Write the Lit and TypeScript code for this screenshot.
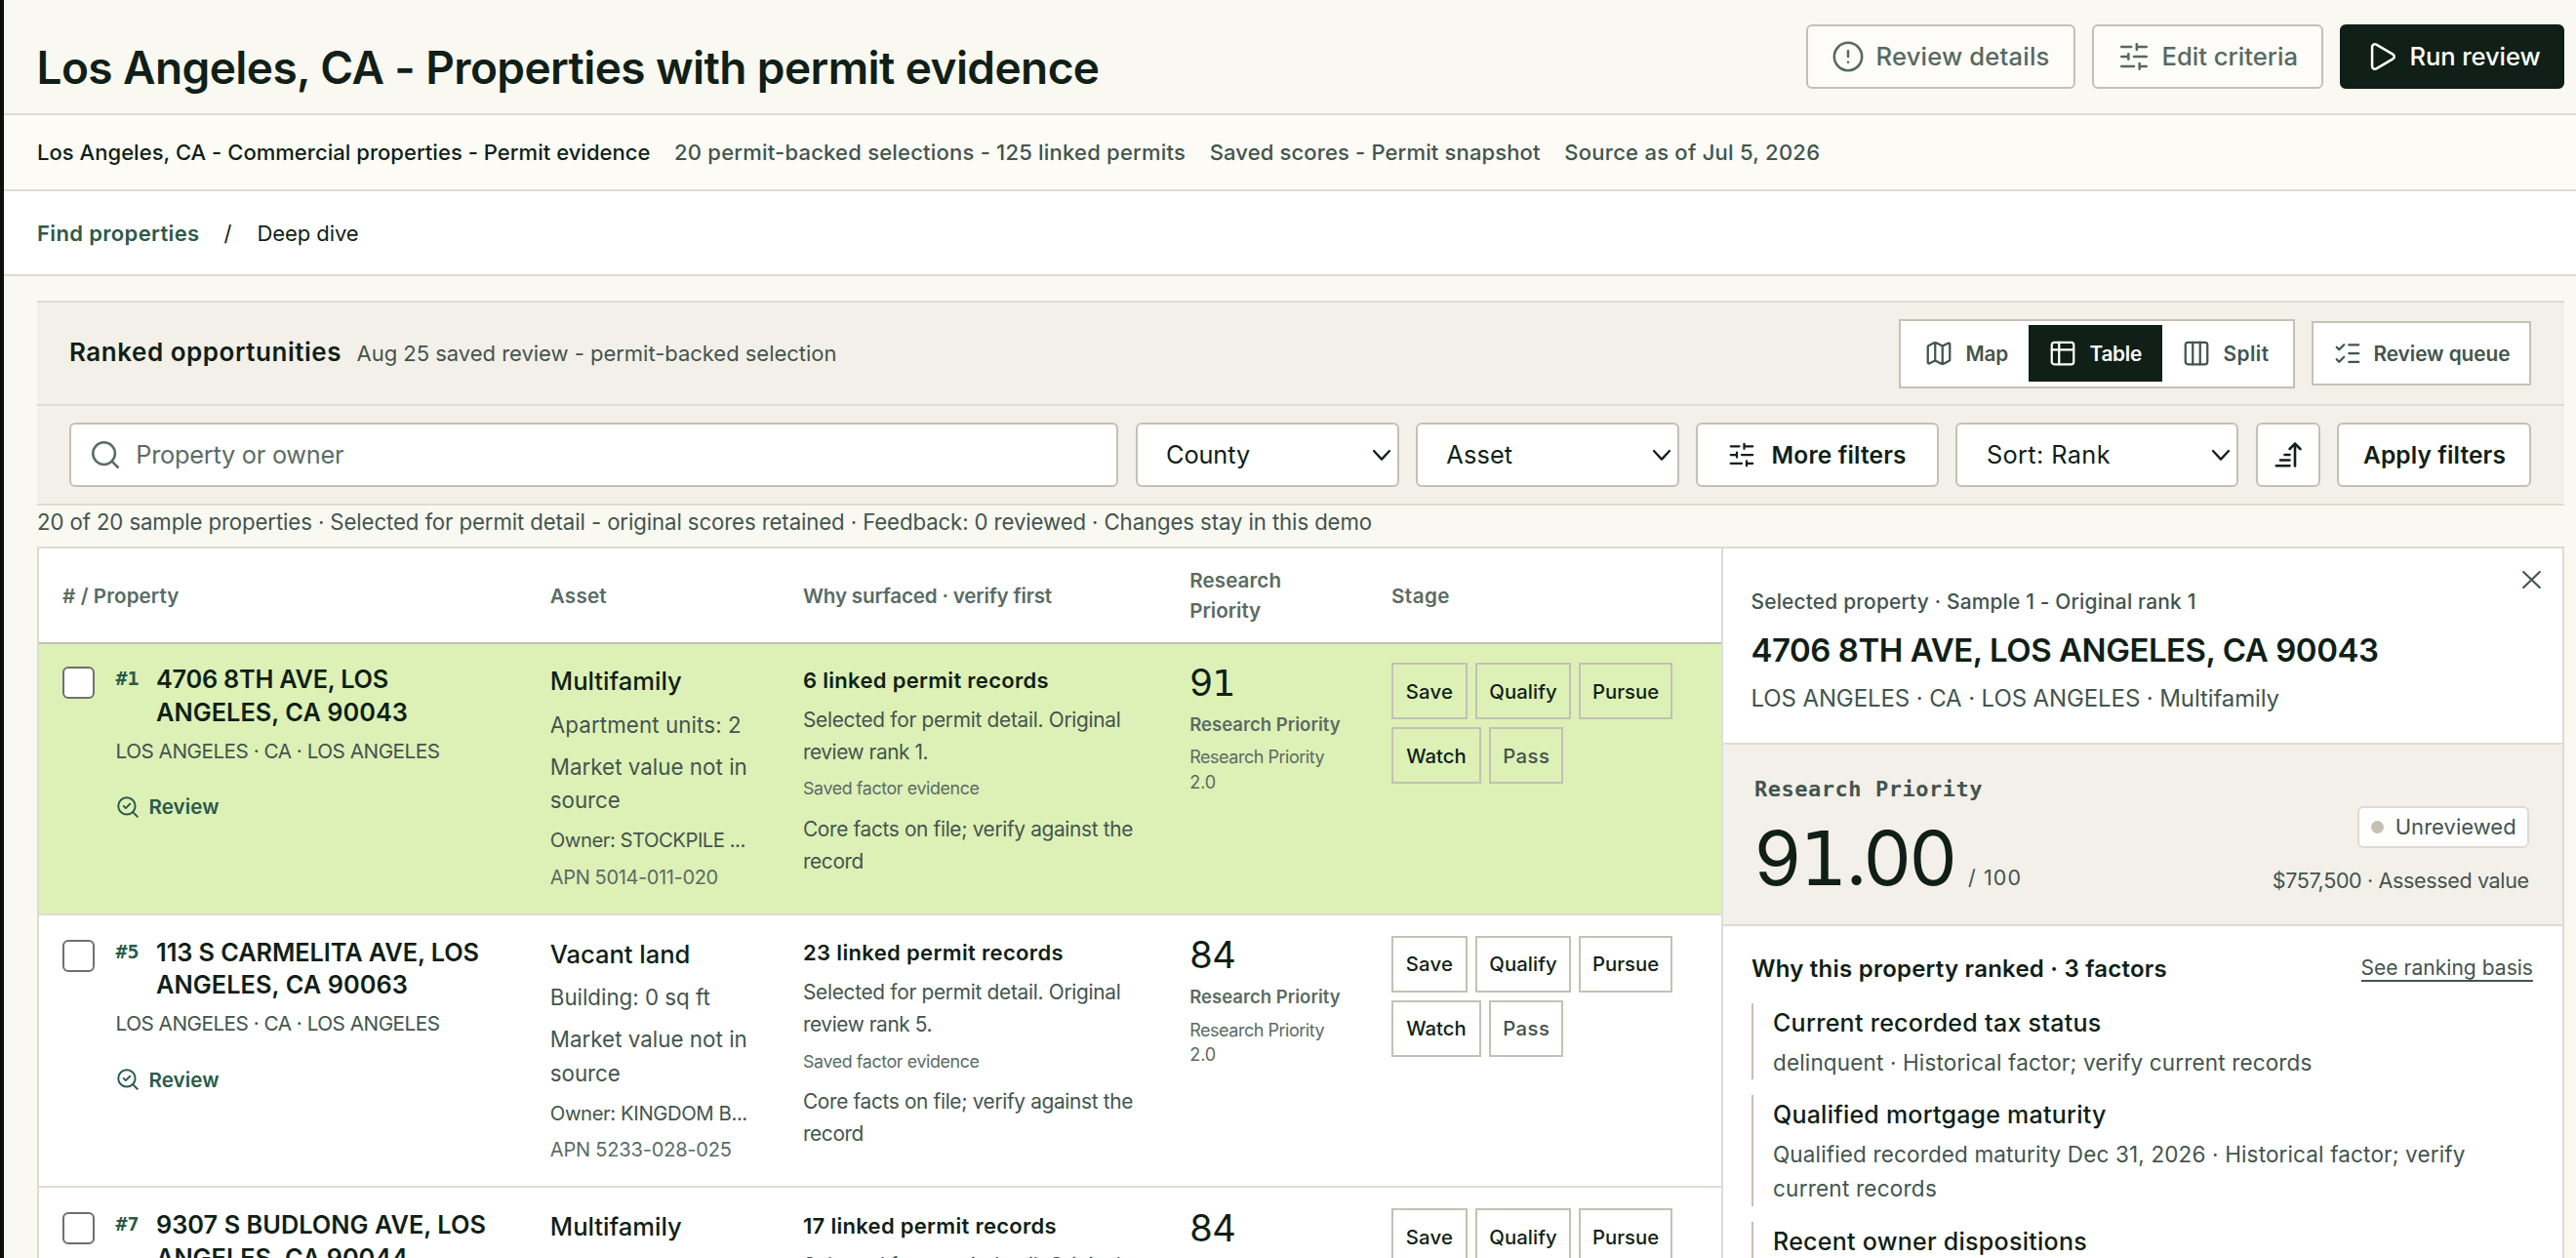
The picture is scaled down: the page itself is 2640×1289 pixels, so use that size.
import { LitElement, html, css, svg, nothing } from "lit";
import { customElement } from "lit/decorators.js";

interface Property {
  rank: string;
  address: [string, number][];
  kind: [string, number];
  size: [string, number];
  owner: [string, number];
  apn: [string, number];
  permits: [string, number];
  review: [string, number];
  score: string;
  selected?: boolean;
}

const PROPERTIES: Property[] = [
  {
    rank: "#1",
    address: [["4706 8TH AVE, LOS", 238], ["ANGELES, CA 90043", 258]],
    kind: ["Multifamily", 135],
    size: ["Apartment units: 2", 196],
    owner: ["Owner: STOCKPILE ...", 200],
    apn: ["APN 5014-011-020", 172],
    permits: ["6 linked permit records", 252],
    review: ["review rank 1.", 128],
    score: "91",
    selected: true,
  },
  {
    rank: "#5",
    address: [["113 S CARMELITA AVE, LOS", 331], ["ANGELES, CA 90063", 258]],
    kind: ["Vacant land", 143.5],
    size: ["Building: 0 sq ft", 164],
    owner: ["Owner: KINGDOM B...", 202],
    apn: ["APN 5233-028-025", 186],
    permits: ["23 linked permit records", 267],
    review: ["review rank 5.", 132],
    score: "84",
  },
  {
    rank: "#7",
    address: [["9307 S BUDLONG AVE, LOS", 338], ["ANGELES, CA 90044", 258]],
    kind: ["Multifamily", 135],
    size: ["Apartment units: 4", 197],
    owner: ["Owner: SUNRISE H...", 201],
    apn: ["APN 6056-003-018", 186],
    permits: ["17 linked permit records", 260],
    review: ["review rank 7.", 132],
    score: "84",
  },
];

const ICONS = {
  alert: svg`<circle cx="12" cy="12" r="10"/><path d="M12 8v4M12 16h.01"/>`,
  sliders: svg`<path d="M10 5H3M12 19H3M14 3v4M16 17v4M21 12h-9M21 19h-5M21 5h-7M8 10v4M8 12H3"/>`,
  play: svg`<path d="M5 5a2 2 0 0 1 3.008-1.728l11.997 6.998a2 2 0 0 1 .003 3.458l-12 7A2 2 0 0 1 5 19z"/>`,
  map: svg`<path d="M14.106 5.553a2 2 0 0 0 1.788 0l3.659-1.83A1 1 0 0 1 21 4.619v12.764a1 1 0 0 1-.553.894l-4.553 2.277a2 2 0 0 1-1.788 0l-4.212-2.106a2 2 0 0 0-1.788 0l-3.659 1.83A1 1 0 0 1 3 19.381V6.618a1 1 0 0 1 .553-.894l4.553-2.277a2 2 0 0 1 1.788 0zM15 5.764v15M9 3.236v15"/>`,
  table: svg`<rect x="3" y="3" width="18" height="18" rx="2"/><path d="M3 9h18M9 3v18"/>`,
  split: svg`<rect x="3" y="3" width="18" height="18" rx="2"/><path d="M9 3v18M15 3v18"/>`,
  checks: svg`<path d="M13 5h8M13 12h8M13 19h8M3 17l2 2 4-4M3 7l2 2 4-4"/>`,
  search: svg`<circle cx="11" cy="11" r="8"/><path d="m21 21-4.34-4.34"/>`,
  searchCheck: svg`<circle cx="11" cy="11" r="8"/><path d="m21 21-4.3-4.3M8 11l2 2 4-4"/>`,
};

const icon = (name: keyof typeof ICONS, cls: string) =>
  html`<svg class="icon ${cls}" viewBox="0 0 24 24" aria-hidden="true">${ICONS[name]}</svg>`;

/* A line of text with the advance width it should occupy. */
const t = (text: string, width: number, cls = "") =>
  html`<span class="t ${cls}" data-w=${width}>${text}</span>`;

const chevron = html`<svg class="chevron" viewBox="0 0 18 11" aria-hidden="true"><path d="M1 1l8 8.6L17 1"/></svg>`;

/* The figure one carries a foot in scores. */
const score = (value: string) =>
  [...value].map((c) => (c === "1" ? html`<span class="one">1</span>` : c));

@customElement("app-root")
export class AppRoot extends LitElement {
  static styles = css`
    :host {
      display: block;
      font-family: Inter, "Liberation Sans", sans-serif;
      color: #101f17;
      --muted: #43544e;
      --soft: #5a6b65;
      --line: #dedbd1;
      --edge: #c4c0b4;
      --green: #2a5b4a;
      --ink: #101f17;
    }
    * { box-sizing: border-box; }
    .page { display: flex; width: 2640px; height: 1289px; overflow: hidden; background: #f9f9f1; }
    .rail { width: 4px; flex: none; background: #0c0f0a; }
    .main { flex: 1; min-width: 0; }
    .t { white-space: pre; display: block; }
    .icon { fill: none; stroke: currentColor; stroke-width: 1.8; stroke-linecap: round; stroke-linejoin: round; flex: none; display: block; }
    .i34 { width: 34px; height: 34px; }
    .i30 { width: 30px; height: 30px; }
    .i26 { width: 26px; height: 26px; }

    .header { display: flex; align-items: center; height: 118px; padding: 0 12.5px 0 33.5px; border-bottom: 2px solid var(--line); }
    .title { margin: 21px auto 0 0; font-size: 46px; font-weight: 600; line-height: 54px; }
    .actions { display: flex; gap: 17px; }
    .btn { display: flex; align-items: center; height: 66px; gap: 12px; padding-left: 24px; border: 2px solid var(--edge); border-radius: 6px; background: #fdfcf8; color: #566963; font-size: 25.6px; font-weight: 500; line-height: 32px; }
    .details { width: 276px; }
    .criteria { width: 237px; }
    .run { width: 230px; background: #101f17; border-color: #101f17; color: #fff; }

    .facts { display: flex; align-items: center; gap: 24.6px; height: 78px; padding-left: 34px; background: #fcfbf6; border-bottom: 2px solid var(--line); font-size: 22px; font-weight: 500; line-height: 30px; color: var(--muted); }
    .dark { color: var(--ink); }
    .crumbs { display: flex; align-items: center; height: 87px; padding-left: 34px; background: #fff; border-bottom: 2px solid var(--line); font-size: 22px; line-height: 30px; }
    .crumb-link { color: var(--green); font-weight: 600; }
    .slash { margin: 0 25px; }

    .content { padding: 25px 12px 0 34px; }
    .tools { background: #f3f0e9; border-top: 2px solid var(--line); border-bottom: 2px solid var(--line); }
    .tools-head { display: flex; align-items: center; height: 106px; padding: 0 34px 0 33px; border-bottom: 2px solid var(--line); }
    .ranked { font-size: 26px; font-weight: 600; line-height: 32px; margin-top: -2px; }
    .saved { font-size: 22px; line-height: 30px; color: var(--muted); margin-left: 15.5px; margin-right: auto; }
    .segments { display: flex; align-items: center; height: 71px; width: 406px; padding: 4px; border: 2px solid var(--edge); background: #fff; color: var(--muted); font-size: 20.8px; font-weight: 600; }
    .segment { display: flex; align-items: center; gap: 12.5px; height: 58px; }
    .seg-map { width: 127px; padding-left: 20px; }
    .seg-table { width: 137px; padding-left: 20px; background: #101f17; color: #fff; }
    .seg-split { padding-left: 20px; }
    .queue { display: flex; align-items: center; gap: 11.5px; width: 225px; height: 66px; margin-left: 17px; padding-left: 20px; border: 2px solid var(--edge); background: #fff; color: var(--muted); font-size: 20.8px; font-weight: 600; }

    .filters { display: flex; align-items: center; gap: 17.3px; height: 100px; padding: 0 34px 0 33.3px; font-size: 25.3px; }
    .field { display: flex; align-items: center; height: 66px; border: 2px solid var(--edge); border-radius: 6px; background: #fff; line-height: 32px; }
    .search { flex: 1; padding-left: 18px; gap: 14px; color: #5b6c66; }
    .select { width: 270px; justify-content: space-between; padding: 0 7px 0 29.5px; }
    .sort { width: 290px; }
    .chevron { width: 18px; height: 11px; fill: none; stroke: currentColor; stroke-width: 2.3; stroke-linecap: round; stroke-linejoin: round; }
    .more { width: 249px; padding-left: 30px; gap: 15.5px; font-weight: 600; font-size: 24.5px; }
    .order { width: 66px; justify-content: center; }
    .order-icon { width: 28px; height: 26px; fill: none; stroke: currentColor; stroke-width: 2.6; stroke-linecap: round; stroke-linejoin: round; }
    .apply { width: 199px; padding-left: 25px; font-weight: 600; font-size: 24.5px; }

    .status { height: 42px; padding-top: 2px; font-size: 22.2px; line-height: 30px; color: var(--muted); }
    .board { display: flex; width: 2590px; height: 760px; border: 2px solid var(--line); background: #fff; }
    .grid { width: 1724px; flex: none; }
    .cols { display: grid; grid-template-columns: 499.8px 259.2px 396.2px 206.8px 1fr; padding-left: 24px; }
    .head { height: 98px; align-items: center; border-bottom: 2px solid var(--edge); font-size: 20.6px; font-weight: 600; line-height: 31px; color: var(--soft); }
    .row { height: 279.5px; padding-top: 20px; border-bottom: 2px solid var(--line); }
    .selected { height: 277.5px; padding-top: 18px; background: #ddf1b6; }

    .property { display: grid; grid-template-columns: 54.5px 1fr; align-items: start; }
    .check { appearance: none; width: 33px; height: 33px; margin: 5px 0 0; border: 2px solid #6f6f6f; border-radius: 6px; background: #fff; }
    .lead { display: grid; grid-template-columns: 42px 1fr; padding-top: 1.4px; }
    .rank { font: 700 20px/32px "DejaVu Sans Mono", "Liberation Mono", monospace; color: var(--green); }
    .address { font-size: 25.3px; font-weight: 600; line-height: 33.2px; margin-left: -0.5px; }
    .place { margin-top: 9px; font-size: 20.7px; line-height: 30px; color: var(--muted); }
    .review { display: flex; align-items: center; gap: 9px; margin: 26.9px 0 0 -1px; height: 30px; font-size: 20.6px; font-weight: 600; color: var(--green); }

    .kind { margin-top: 3.4px; font-size: 25.6px; font-weight: 500; line-height: 34px; }
    .size { margin-top: 10.6px; font-size: 22.3px; line-height: 34.5px; color: var(--muted); }
    .market { margin-top: 8.2px; font-size: 22.3px; line-height: 34.5px; color: var(--muted); }
    .owner { margin-top: 8.5px; font-size: 20.3px; line-height: 30px; color: var(--muted); }
    .apn { margin-top: 7.8px; font-size: 20px; line-height: 30px; color: var(--soft); }

    .permits { margin-top: 1.5px; font-size: 22px; font-weight: 600; line-height: 34px; }
    .why { margin-top: 7.1px; font-size: 20.8px; line-height: 33.3px; color: var(--muted); }
    .evidence { margin-top: 7.3px; font-size: 17.8px; line-height: 28px; color: var(--soft); }
    .core { margin-top: 10.1px; font-size: 20.8px; line-height: 33.3px; color: var(--muted); }

    .score { margin-top: -2.5px; height: 46px; font-size: 38px; line-height: 46px; }
    .one { font-family: "DejaVu Sans", sans-serif; }
    .score-name { margin-top: 7.2px; font-size: 18.5px; font-weight: 600; line-height: 26px; color: var(--soft); }
    .score-version { margin-top: 8.7px; font-size: 18px; line-height: 25.6px; color: var(--soft); }

    .stages { display: flex; flex-wrap: wrap; align-content: flex-start; gap: 8.3px; padding-top: 1.2px; width: 300px; }
    .stage { display: flex; align-items: center; justify-content: center; height: 58px; border: 2px solid var(--edge); font-size: 20.3px; font-weight: 500; }
    .save { width: 78px; } .qualify { width: 97.5px; } .pursue { width: 96px; } .watch { width: 92px; }
    .pass { width: 76px; color: var(--muted); }

    .detail { flex: 1; position: relative; border-left: 2px solid #d9dedb; }
    .close { position: absolute; top: 23px; right: 22px; width: 19px; height: 18px; fill: none; stroke: #43544e; stroke-width: 2.1; stroke-linecap: round; }
    .summary { height: 201px; padding: 39.7px 0 0 28.5px; border-bottom: 2px solid var(--line); }
    .eyebrow { font-size: 20.9px; font-weight: 500; line-height: 30px; color: var(--muted); }
    .name { margin-top: 14.5px; font-size: 33px; font-weight: 600; line-height: 40px; }
    .where { margin-top: 12.7px; font-size: 24px; line-height: 34px; color: var(--muted); }
    .rating { display: flex; justify-content: space-between; height: 186px; padding: 31.2px 34.3px 0 32px; background: #f3f0e9; border-bottom: 2px solid var(--line); }
    .rating-name { font: 700 22px/30px "DejaVu Sans Mono", "Liberation Mono", monospace; color: var(--muted); }
    .rating-line { display: flex; align-items: baseline; gap: 13px; margin-top: 15.2px; height: 80px; }
    .rating-value { font-size: 77px; line-height: 80px; }
    .rating-max { font-size: 21.5px; line-height: 30px; color: var(--muted); }
    .rating-side { display: flex; flex-direction: column; align-items: flex-end; padding-top: 31.7px; }
    .badge { display: flex; align-items: center; gap: 11.5px; width: 176px; height: 43px; padding-left: 12.5px; border: 2px solid var(--line); border-radius: 6px; background: #fff; font-size: 22px; color: var(--muted); }
    .dot { width: 13px; height: 13px; border-radius: 50%; background: var(--edge); }
    .assessed { margin-top: 18.3px; font-size: 21.5px; line-height: 30px; color: var(--muted); }
    .reasons { padding: 26.8px 30px 0 29px; }
    .reasons-head { display: flex; align-items: center; justify-content: space-between; height: 34px; margin-bottom: 18.4px; }
    .reasons-title { font-size: 24px; font-weight: 600; line-height: 34px; }
    .basis { font-size: 21px; line-height: 25px; height: 27px; color: var(--muted); border-bottom: 2px solid var(--muted); }
    .factor { margin-bottom: 16.3px; padding: 1.4px 0 0 20px; border-left: 2px solid var(--edge); }
    .factor-name { font-size: 25px; font-weight: 500; line-height: 36px; }
    .factor-text { margin-top: 5.2px; font-size: 22.5px; line-height: 35.4px; color: var(--muted); }
  `;

  /* Tracks each line so that its advance equals the width it declares. */
  protected updated() {
    const range = document.createRange();
    this.renderRoot.querySelectorAll<HTMLElement>("[data-w]").forEach((el) => {
      el.style.letterSpacing = "0";
      range.selectNodeContents(el);
      const natural = range.getBoundingClientRect().width;
      const count = (el.textContent ?? "").length;
      el.style.letterSpacing = `${(Number(el.dataset.w) - natural) / count}px`;
    });
  }

  private row(p: Property) {
    return html`
      <div class="cols row ${p.selected ? "selected" : ""}">
        <div class="property">
          <input class="check" type="checkbox" />
          <div>
            <div class="lead">
              <span class="rank">${p.rank}</span>
              <div class="address">${p.address.map(([s, w]) => t(s, w))}</div>
            </div>
            <div class="place">${t("LOS ANGELES · CA · LOS ANGELES", 332)}</div>
            <div class="review">${icon("searchCheck", "i26")}${t("Review", 72)}</div>
          </div>
        </div>
        <div>
          <div class="kind">${t(...p.kind)}</div>
          <div class="size">${t(...p.size)}</div>
          <div class="market">${t("Market value not in", 202)}${t("source", 72)}</div>
          <div class="owner">${t(...p.owner)}</div>
          <div class="apn">${t(...p.apn)}</div>
        </div>
        <div>
          <div class="permits">${t(...p.permits)}</div>
          <div class="why">${t("Selected for permit detail. Original", 325.5)}${t(...p.review)}</div>
          <div class="evidence">${t("Saved factor evidence", 180.5)}</div>
          <div class="core">${t("Core facts on file; verify against the", 338)}${t("record", 62)}</div>
        </div>
        <div>
          <div class="score"><span class="t" data-w="47">${score(p.score)}</span></div>
          <div class="score-name">${t("Research Priority", 154.5)}</div>
          <div class="score-version">${t("Research Priority", 138)}${t("2.0", 27)}</div>
        </div>
        <div class="stages">
          <div class="stage save">${t("Save", 48.5)}</div>
          <div class="stage qualify">${t("Qualify", 69.5)}</div>
          <div class="stage pursue">${t("Pursue", 68)}</div>
          <div class="stage watch">${t("Watch", 61.5)}</div>
          <div class="stage pass">${t("Pass", 48)}</div>
        </div>
      </div>
    `;
  }

  private factor(name: [string, number], lines: [string, number][]) {
    return html`
      <div class="factor">
        <div class="factor-name">${t(...name)}</div>
        ${lines.length ? html`<div class="factor-text">${lines.map(([s, w]) => t(s, w))}</div>` : nothing}
      </div>
    `;
  }

  render() {
    return html`
      <div class="page">
        <div class="rail"></div>
        <div class="main">
          <div class="header">
            <div class="title">${t("Los Angeles, CA - Properties with permit evidence", 1089)}</div>
            <div class="actions">
              <div class="btn details">${icon("alert", "i34")}${t("Review details", 178)}</div>
              <div class="btn criteria">${icon("sliders", "i34")}${t("Edit criteria", 139.5)}</div>
              <div class="btn run">${icon("play", "i34")}${t("Run review", 134)}</div>
            </div>
          </div>
          <div class="facts">
            ${t("Los Angeles, CA - Commercial properties - Permit evidence", 628.5, "dark")}
            ${t("20 permit-backed selections - 125 linked permits", 524)}
            ${t("Saved scores - Permit snapshot", 339)}
            ${t("Source as of Jul 5, 2026", 262)}
          </div>
          <div class="crumbs">
            ${t("Find properties", 166.5, "crumb-link")}
            ${t("/", 9, "slash")}
            ${t("Deep dive", 104)}
          </div>

          <div class="content">
            <div class="tools">
              <div class="tools-head">
                <div class="ranked">${t("Ranked opportunities", 279)}</div>
                <div class="saved">${t("Aug 25 saved review - permit-backed selection", 492)}</div>
                <div class="segments">
                  <div class="segment seg-map">${icon("map", "i30")}${t("Map", 43.5)}</div>
                  <div class="segment seg-table">${icon("table", "i30")}${t("Table", 53.5)}</div>
                  <div class="segment seg-split">${icon("split", "i30")}${t("Split", 47)}</div>
                </div>
                <div class="queue">${icon("checks", "i30")}${t("Review queue", 140)}</div>
              </div>
              <div class="filters">
                <div class="field search">${icon("search", "i34")}${t("Property or owner", 213)}</div>
                <div class="field select">${t("County", 86)}${chevron}</div>
                <div class="field select">${t("Asset", 68)}${chevron}</div>
                <div class="field more">${icon("sliders", "i30")}${t("More filters", 138)}</div>
                <div class="field select sort">${t("Sort: Rank", 127)}${chevron}</div>
                <div class="field order">
                  <svg class="order-icon" viewBox="0 0 28 26" aria-hidden="true"><path d="M21 24.5V1.6M15.6 7L21 1.6 26.4 7M10.5 13h5M6 18.5h9.5M1.8 24.2h13.7"/></svg>
                </div>
                <div class="field apply">${t("Apply filters", 146)}</div>
              </div>
            </div>
            <div class="status">
              ${t("20 of 20 sample properties · Selected for permit detail - original scores retained · Feedback: 0 reviewed · Changes stay in this demo", 1368)}
            </div>

            <div class="board">
              <div class="grid">
                <div class="cols head">
                  ${t("# / Property", 119.5)}
                  ${t("Asset", 58)}
                  ${t("Why surfaced · verify first", 255)}
                  <div>${t("Research", 94)}${t("Priority", 73)}</div>
                  ${t("Stage", 60)}
                </div>
                ${PROPERTIES.map((p) => this.row(p))}
              </div>
              <div class="detail">
                <svg class="close" viewBox="0 0 19 18" aria-hidden="true"><path d="M1.2 1L17.8 17M17.8 1L1.2 17"/></svg>
                <div class="summary">
                  <div class="eyebrow">${t("Selected property · Sample 1 - Original rank 1", 456)}</div>
                  <div class="name">${t("4706 8TH AVE, LOS ANGELES, CA 90043", 643)}</div>
                  <div class="where">${t("LOS ANGELES · CA · LOS ANGELES · Multifamily", 541.5)}</div>
                </div>
                <div class="rating">
                  <div>
                    <div class="rating-name">${t("Research Priority", 234)}</div>
                    <div class="rating-line">
                      <span class="t rating-value" data-w="206">${score("91.00")}</span>
                      ${t("/ 100", 55, "rating-max")}
                    </div>
                  </div>
                  <div class="rating-side">
                    <div class="badge"><span class="dot"></span>${t("Unreviewed", 124)}</div>
                    <div class="assessed">${t("$757,500 · Assessed value", 263)}</div>
                  </div>
                </div>
                <div class="reasons">
                  <div class="reasons-head">
                    <div class="reasons-title">${t("Why this property ranked · 3 factors", 426)}</div>
                    <div class="basis">${t("See ranking basis", 176.5)}</div>
                  </div>
                  ${this.factor(["Current recorded tax status", 336.5], [["delinquent · Historical factor; verify current records", 552.5]])}
                  ${this.factor(["Qualified mortgage maturity", 341.5], [
                    ["Qualified recorded maturity Dec 31, 2026 · Historical factor; verify", 709.5],
                    ["current records", 168],
                  ])}
                  ${this.factor(["Recent owner dispositions", 322], [])}
                </div>
              </div>
            </div>
          </div>
        </div>
      </div>
    `;
  }
}
